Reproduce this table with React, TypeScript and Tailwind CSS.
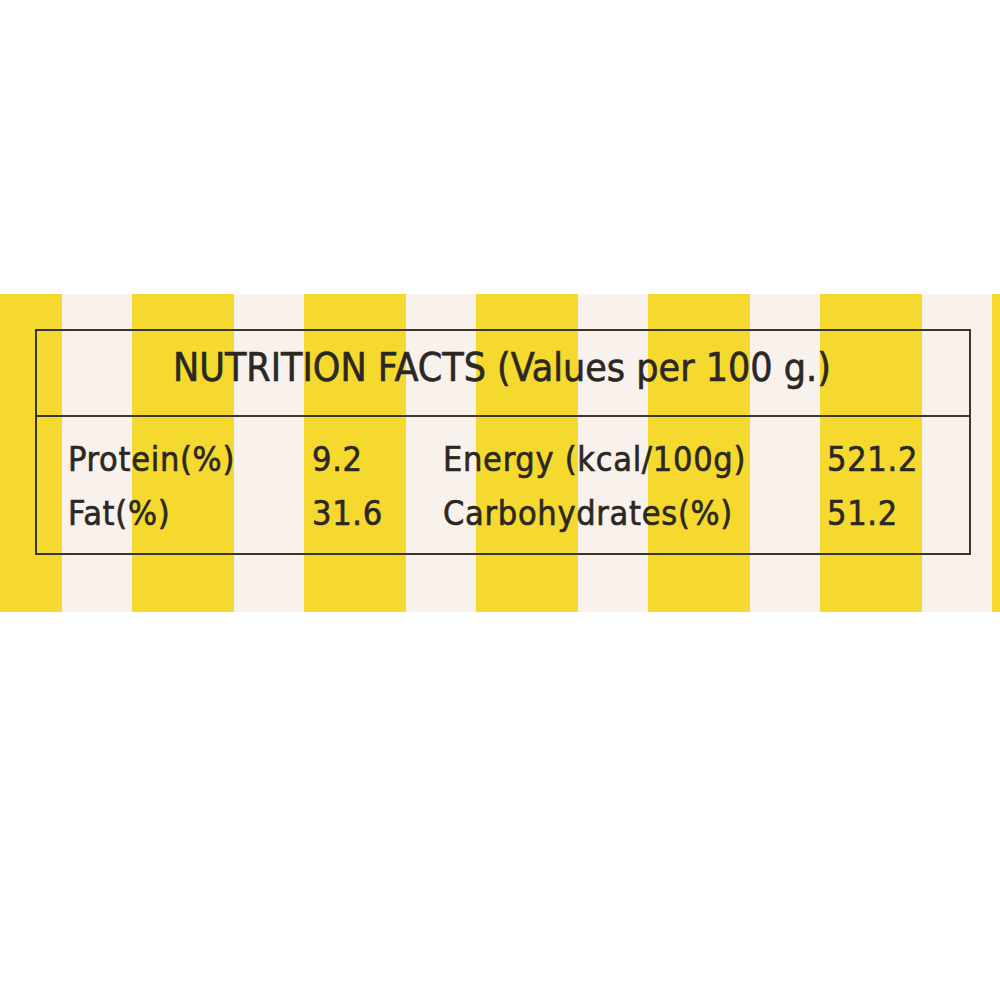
import React from "react"

const rows = [
  ["Protein(%)", "9.2", "Energy (kcal/100g)", "521.2"],
  ["Fat(%)", "31.6", "Carbohydrates(%)", "51.2"],
]

export default function App() {
  return (
    <div className="min-h-[1000px] w-[1000px] bg-white pt-[294px] font-['Liberation_Sans_Narrow','DejaVu_Sans_Condensed','Liberation_Sans',sans-serif] text-[#2b2723] [-webkit-text-stroke:0.6px_#2b2723]">
      <div className="h-[318px] bg-[repeating-linear-gradient(90deg,#f5d92e_0_62px,#f8f1ec_62px_132px,#f5d92e_132px_172px)] pl-[35px] pr-[29px] pt-[35px]">
        <div className="border-2 border-[#3b3630]">
          <div className="h-[86px] border-b-2 border-[#3b3630] pl-[136px] pt-[17px] text-[39px] leading-none">
            NUTRITION FACTS (Values per 100 g.)
          </div>
          <div className="grid grid-cols-[244px_131px_384px_auto] pl-[31px] pt-[15px] pb-[13px] text-[34px] leading-[54px] tracking-[0.7px]">
            {rows.map((r) =>
              r.map((c, i) => <div key={r[0] + i}>{c}</div>)
            )}
          </div>
        </div>
      </div>
    </div>
  )
}
